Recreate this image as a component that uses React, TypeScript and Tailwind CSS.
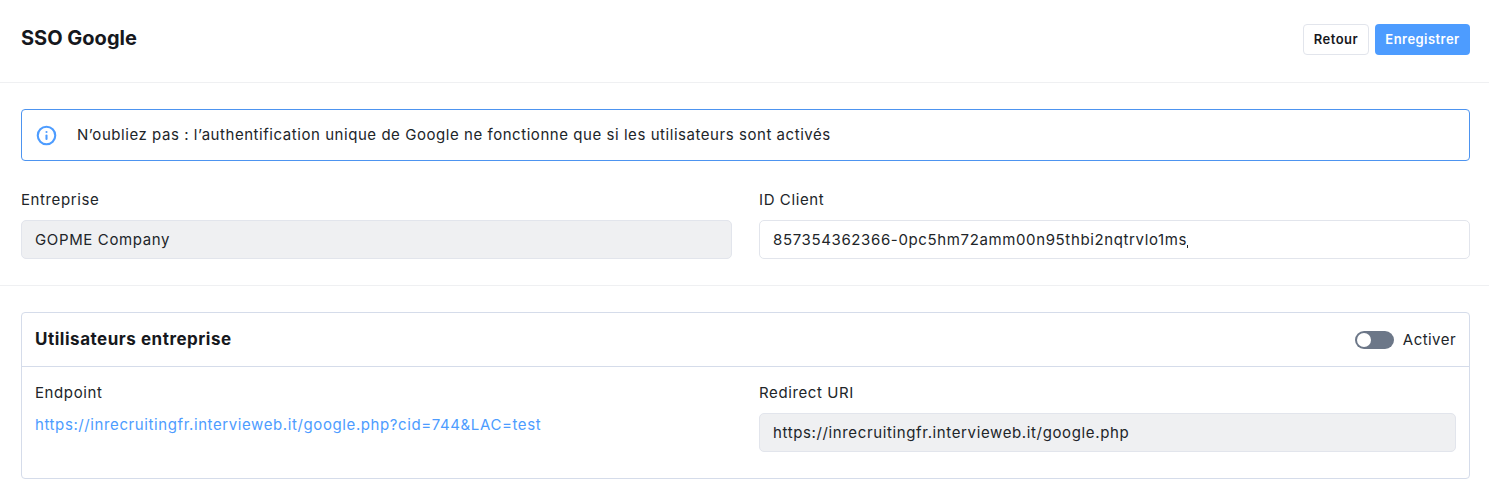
import { Info } from 'lucide-react';

const font = "font-['Inter','Noto_Sans',sans-serif]";

function Field({ label, value, disabled, children }: { label: string; value: string; disabled?: boolean; children?: React.ReactNode }) {
  return (
    <div className="flex-1 min-w-0">
      <div className="h-[21px] text-[15px] leading-[21px] tracking-[0.6px] text-[#212529]">{label}</div>
      <div className={`mt-[10px] h-[39px] rounded-[5px] border border-[#e2e5ec] px-[13px] text-[15px] leading-[37px] tracking-[0.63px] text-[#212529] ${disabled ? 'bg-[#eff0f2]' : 'bg-white'}`}>
        {value}
        {children}
      </div>
    </div>
  );
}

export default function App() {
  return (
    <div className={`w-[1489px] h-[498px] overflow-hidden bg-white ${font}`}>
      {/* header */}
      <div className="h-[83px] border-b border-[#eff0f2] pl-[21px] pr-[19px] pt-[24px] flex items-start justify-between">
        <h1 className="text-[20px] leading-[28px] font-bold text-[#16181d]">SSO Google</h1>
        <div className="flex gap-[6px]">
          <button className="w-[66px] h-[31px] rounded-[4px] border border-[#e2e5ec] bg-white text-[13px] font-semibold tracking-[0.5px] text-[#16181d]">Retour</button>
          <button className="w-[95px] h-[31px] rounded-[4px] bg-[#4d9cff] text-[13px] font-semibold tracking-[0.45px] text-white">Enregistrer</button>
        </div>
      </div>

      <div className="pl-[21px] pr-[19px] pt-[26px]">
        <div className="h-[52px] rounded-[4px] border border-[#4d94f0] flex items-center pl-[14px]">
          <Info size={21} strokeWidth={2.4} className="text-[#4d9cff]" />
          <span className="ml-[20px] text-[15px] tracking-[0.55px] text-[#212529]">N’oubliez pas : l’authentification unique de Google ne fonctionne que si les utilisateurs sont activés</span>
        </div>

        <div className="mt-[28px] flex gap-[27px]">
          <Field label="Entreprise" value="GOPME Company" disabled />
          <Field label="ID Client" value="857354362366-0pc5hm72amm00n95thbi2nqtrvlo1ms">
            <span className="inline-block w-[1px] h-[3px] bg-[#212529] align-[-3px]" />
          </Field>
        </div>
      </div>

      <div className="mt-[26px] border-t border-[#eff0f2]" />

      <div className="pl-[21px] pr-[19px] pt-[26px]">
        <div className="h-[167px] rounded-[4px] border border-[#d5dcea]">
          <div className="h-[54px] border-b border-[#d5dcea] flex items-center justify-between pl-[13px] pr-[13px]">
            <h2 className="text-[17px] font-bold tracking-[0.52px] text-[#16181d]">Utilisateurs entreprise</h2>
            <div className="flex items-center gap-[9px]">
              <span className="w-[39px] h-[18px] rounded-full bg-[#6c7788] flex items-center pl-[2px]">
                <span className="w-[14px] h-[14px] rounded-full bg-white" />
              </span>
              <span className="text-[15px] leading-[22px] mt-[1px] tracking-[0.45px] text-[#212529]">Activer</span>
            </div>
          </div>
          <div className="flex gap-[27px] pl-[13px] pr-[13px] pt-[15px]">
            <div className="flex-1 min-w-0">
              <div className="h-[21px] text-[15px] leading-[21px] tracking-[0.6px] text-[#212529]">Endpoint</div>
              <a className="block mt-[11px] text-[15px] leading-[21px] tracking-[0.6px] text-[#4d9cff]">https://inrecruitingfr.intervieweb.it/google.php?cid=744&amp;LAC=test</a>
            </div>
            <Field label="Redirect URI" value="https://inrecruitingfr.intervieweb.it/google.php" disabled />
          </div>
        </div>
      </div>
    </div>
  );
}
